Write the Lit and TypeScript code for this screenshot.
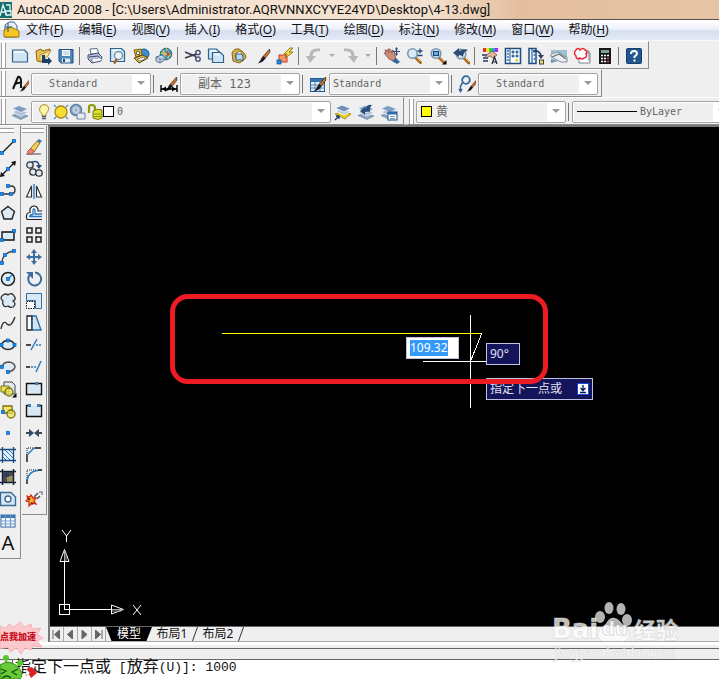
import { LitElement, html, svg, css, nothing } from "lit";
import { customElement, property } from "lit/decorators.js";

const node = (x: number, y: number) => svg`<rect x=${x - 1.5} y=${y - 1.5} width="3" height="3" fill="#1590f0" stroke="#0a5cae" stroke-width=".7"/>`;
const brush = svg`<path d="M16.5 2 L10 9.5 L12 11.5 L17 5Z" fill="#c87632" stroke="#402010" stroke-width=".7"/><path d="M10.5 9 L12.5 11 Q11 15 5 16.5 Q8 13 8.5 11Z" fill="#1c1c24"/>`;
const smallBrush = svg`<g transform="translate(5 4) scale(.78)">${brush}</g>`;
const lens = (x: number, y: number) => svg`<path d=${`M${x + 3} ${y + 4} L${x + 8} ${y + 9}`} stroke="#a8641c" stroke-width="3" stroke-linecap="round"/><path d=${`M${x + 4} ${y + 4} L${x + 8} ${y + 8}`} stroke="#f0b860" stroke-width="1"/><circle cx=${x} cy=${y} r="4.8" fill="#d8ebf6" stroke="#7c98ae" stroke-width="1.6"/>`;
const stack = svg`<path d="M1 12.500 L8 10 L17 13 L10 16.500Z" fill="#8ea7c4" stroke="#60799a" stroke-width=".6"/><path d="M1 9 L8 6.500 L17 9.500 L10 13Z" fill="#a9bfd8" stroke="#f4f8fc" stroke-width=".8"/><path d="M1 5.500 L8 2.500 L17 6 L10 9.500Z" fill="#7f9cbe" stroke="#eef4fa" stroke-width=".8"/>`;
const goldStack = svg`<path d="M1 11 L8 8 L17 11 L11 16Z" fill="#e8cc20" stroke="#8c7408" stroke-width=".7"/><path d="M1 8 L8 6 L17 8.500 L10 12Z" fill="#b4cadf" stroke="#fff" stroke-width=".8"/><path d="M1 5 L8 2 L17 5.500 L10 9Z" fill="#6f91b8" stroke="#fff" stroke-width=".8"/>`;
const page = (x: number, y: number, w: number, h: number) => svg`<path d=${`M${x} ${y} h${w - 3} l3 3 v${h - 3} h${-w}Z`} fill="#cfe5f5" stroke="#2d638e" stroke-width="1.2"/><path d=${`M${x + 2} ${y + 2} h${w - 6}`} stroke="#fff" stroke-width="1.5"/>`;

const icons: Record<string, unknown> = {
  new: svg`${page(1.5, 3, 15, 12)}`,
  open: svg`<path d="M2 4 L7 2 L8 4 L16 2 L14 8 L7 15 L3 14Z" fill="#e9c154" stroke="#8d6713"/><path d="M6 8 L17 3 L14 9 L6 15Z" fill="#f8e29a" stroke="#a87c20" stroke-width=".8"/><path d="M8 8 h3 v4 h3 v-2 l4 4 l-4 4 v-2 h-6Z" fill="#1d3f66"/>`,
  save: svg`<path d="M2 2.500 H16 V16 H4 L2 14Z" fill="#4c86b9" stroke="#1d5083"/><path d="M5 3 h8 v6 h-8Z" fill="#f6f9fc"/><path d="M6 5h6M6 7h6" stroke="#9cb4ca" stroke-width=".8"/><path d="M5 11.500 h8 v4 h-8Z" fill="#e2e8ef"/><path d="M6 12h2v3h-2Z" fill="#1d5083"/>`,
  print: svg`<path d="M5 7 L4 2 L11 1.500 L13 7Z" fill="#fff" stroke="#60708a"/><path d="M2 8 L12 6 L16 10 L15 14 L6 16 L2 12Z" fill="#b9c4dc" stroke="#3e4c6c"/><path d="M3 10 L12 9 L15 12 M5 13 L14 11" stroke="#3e4c6c" fill="none"/><path d="M6 12 L14 11 L16 13 L8 15Z" fill="#f6f8fc"/>`,
  preview: svg`${page(1.5, 1.5, 14, 13)}<circle cx="9.500" cy="8.500" r="4" fill="#e9f4fb" stroke="#6f8da6" stroke-width="1.300"/><path d="M8 12 L5 16.500" stroke="#a8641c" stroke-width="2.500"/>`,
  publish: svg`<circle cx="12" cy="7" r="5" fill="#3a8fd0" stroke="#225c92"/><path d="M2 3 L9 2 L10 8 L4 10Z" fill="#f2c83c" stroke="#77590c"/><circle cx="6" cy="6" r="1.800" fill="#fff" stroke="#222" stroke-width=".8"/><path d="M2 11 L11 8 L16 11 L7 16Z" fill="#ecbe38" stroke="#574414"/><path d="M5 12 L12 10 L13 12 L8 14Z" fill="#fff" stroke="#444" stroke-width=".6"/>`,
  web: svg`<circle cx="11" cy="7" r="5.800" fill="#3d98cc" stroke="#1f6590"/><path d="M7 3 Q12 6 8 11 M11 1.500 Q15 6 13 12 M6 6 L16 8" stroke="#e5c740" fill="none" stroke-width="1.300"/><path d="M12 3 L15 8 L12 9Z" fill="#c4472c"/><path d="M1 10 L7 8 L11 12 L5 16 L1 14Z" fill="#c8d8e8" stroke="#53708e"/><path d="M1 10 L5 12 L11 12 M5 12 V16" stroke="#53708e" fill="none" stroke-width=".8"/>`,
  cut: svg`<path d="M1 5 L12 9.500 M1 11 L12 7" stroke="#343c4c" stroke-width="1.600"/><circle cx="14" cy="5.500" r="2.200" fill="none" stroke="#3c456a" stroke-width="1.300"/><circle cx="14" cy="12" r="2.200" fill="none" stroke="#3c456a" stroke-width="1.300"/><path d="M11 10 L13 11" stroke="#3c456a"/>`,
  copy: svg`${page(1.5, 2, 11, 10)}${page(5.5, 5.5, 11, 10)}`,
  paste: svg`<path d="M2 6 Q4 1 9 2 L13 5 L16 9 Q16 13 9 16 L3 14Z" fill="#d6b450" stroke="#7f651d"/><path d="M5 7 L10 4 L13 8 L12 12 L6 12Z" fill="#fff" stroke="#8b7330"/><path d="M6 7 h5 l2 2 v4 h-7Z" fill="#b9d8ef" stroke="#2d638e"/>`,
  match: svg`${brush}`,
  block: svg`<rect x="3" y="8" width="8" height="7" fill="#f79468" stroke="#c8381c"/><rect x="1" y="13" width="4" height="4" fill="#1590f0" stroke="#0a4c8e" stroke-width=".7"/><path d="M14 1 L8 7 H11 L9 11 L17 5 H13 L17 1Z" fill="#fbe23a" stroke="#7c5a08" stroke-width=".8"/>`,
  undo: svg`<path d="M15 3 Q6 2 6 9" fill="none" stroke="#b5b8bd" stroke-width="3"/><path d="M1 9 H11 L5 16Z" fill="#b5b8bd"/>`,
  redo: svg`<path d="M3 3 Q12 2 12 9" fill="none" stroke="#b5b8bd" stroke-width="3"/><path d="M7 9 H17 L13 16Z" fill="#b5b8bd"/>`,
  pan: svg`<path d="M1 6 L3 6 L2 3 L4 3 L6 6 L5 2 L7 2 L9 6 L9 3 L11 4 L13 12 L10 14 L6 12Z" fill="#c98d7c" stroke="#8a4b40" stroke-width=".8"/><path d="M9 14 L13 11 L17 15 L14 17Z" fill="#3465a0"/><path d="M13.500 1 V8 M10 4.500 H17 M12.500 2.500 l1 -1.500 l1 1.500 M12.500 6.500 l1 1.500 l1 -1.500" stroke="#24487c" fill="none" stroke-width="1.200"/>`,
  zoom: svg`${lens(6.5, 6.5)}<path d="M11.500 4 h5 M14 1.500 v5 M11.500 8.500 h5" stroke="#24487c" stroke-width="1.300"/>`,
  zoomwin: svg`${lens(7, 6.5)}<rect x="4.500" y="4.500" width="5" height="4" fill="#7ab4dc" stroke="#174a80" stroke-width="1.200"/><path d="M17.500 13 v4.500 h-4.500Z" fill="#000"/>`,
  zoomprev: svg`${lens(9, 7)}<path d="M1 6 L7 1 V4 Q13 1 16 3 Q11 5 11 10 Q9 8 7 8 V10Z" fill="#2c4d76"/>`,
  props: svg`<path d="M2 1h3v4h-3Z" fill="#f02828"/><path d="M5 1h3v4h-3Z" fill="#f0e428"/><path d="M8 1h3v4h-3Z" fill="#30d43c"/><path d="M11 1h3v4h-3Z" fill="#28a0e8"/><path d="M14 1h3v4h-3Z" fill="#b028e0"/><path d="M4 9 L11 4 L16 8 L12 11 L9 9 L5 11Z" fill="#eab49c" stroke="#7a4637" stroke-width=".8"/><path d="M1 8h5M2 11h5M2 14h5" stroke="#536880" stroke-width="1.800"/><path d="M11 17 L13.500 10 L16 17 M12 15h4" stroke="#20242c" fill="none" stroke-width="1.200"/>`,
  center: svg`<path d="M1.500 1.500 H16.500 V16.500 H1.500Z" fill="#fff" stroke="#1c4f83" stroke-width="1.600"/><path d="M6 1v16" stroke="#1c4f83"/><path d="M3 4h2M3 7h2M3 10h2M3 13h2" stroke="#2e76b4" stroke-width="1.400"/><path d="M8 4h2v2h-2ZM12 4h2v2h-2ZM8 8h2v2h-2ZM12 8h2v2h-2Z" fill="#5c94c4" stroke="#1c4f83" stroke-width=".7"/><rect x="11.500" y="12" width="2.500" height="2.500" fill="#e6c830"/>`,
  palettes: svg`<path d="M2 1.500 H9 V16.500 H2Z" fill="#e9f3fb" stroke="#1c4f83" stroke-width="1.500"/><path d="M5 1v16" stroke="#1c4f83"/><path d="M6.500 5h1.500M6.500 8h1.500M6.500 12h1.500" stroke="#2e76b4" stroke-width="1.500"/><path d="M6 4 Q13 3 14 9" stroke="#263f60" stroke-width="1.600" fill="none"/><path d="M11 8h6l-3 4Z" fill="#263f60"/><rect x="12.500" y="13" width="4" height="4" fill="#f4de57" stroke="#334455"/>`,
  sheets: svg`<path d="M1 3 H17 V14 L12 10 L6 5 L1 7Z" fill="#9fbfd3"/><path d="M1 7 L8 5 L14 9 L17 10 V15 L11 15 L1 10Z" fill="#e9eef1" stroke="#7f8d96"/><path d="M2 10 L9 7 L16 12" stroke="#65747f" stroke-width="1.300" fill="none"/><path d="M1 12 L8 14 L1 16Z" fill="#6c93b0"/>`,
  markup: svg`<path d="M5 4H16V14M7 6H17V16H6V12" fill="#fff" stroke="#7c838c"/><path d="M3 3 Q5 0 7 3 Q10 0 12 3 Q15 4 13 7 Q15 10 11 11 Q9 13 7 11 Q3 13 3 9 Q0 6 3 3Z" fill="#fff" stroke="#ee2434" stroke-width="1.500"/>`,
  calc: svg`<rect x="3" y="1" width="12" height="16" fill="#171717"/><rect x="5" y="3" width="8" height="3" fill="#7aa58a"/><path d="M5 8.500h2M8 8.500h2M11 8.500h2M5 11.500h2M8 11.500h2M5 14.500h2M8 14.500h2" stroke="#fff" stroke-width="1.500"/><path d="M11 11.500h2M11 14.500h2" stroke="#f03434" stroke-width="1.500"/>`,
  help: svg`<rect x="1.500" y="1.500" width="15" height="15" rx="1" fill="#21578f" stroke="#173e6c"/><path d="M6 7 Q6 4 9 4 Q12 4 12 6.500 Q12 8 9.500 9.500 V11" fill="none" stroke="#fff" stroke-width="2"/><path d="M8.500 12.500h2v2h-2Z" fill="#fff"/>`,
  tstyle: svg`<path d="M2 14 L7 2 Q9 1 10 5 V13 M4 9 Q8 7 11 8" fill="none" stroke="#101010" stroke-width="2"/>${smallBrush}`,
  dstyle: svg`${brush}<path d="M1 10v7M17 10v7M1 14h16" stroke="#000" stroke-width="1.400"/><path d="M2 14l4 -2.500v5ZM16 14l-4 -2.500v5Z" fill="#000"/>`,
  tbstyle: svg`<rect x="1.500" y="3.500" width="14" height="13" fill="#e0edf8" stroke="#245890"/><path d="M1 4h15v3h-15Z" fill="#3974ac"/><path d="M1.500 10h14M1.500 13h14M6 7v9M11 7v9" stroke="#5786b0"/>${brush}`,
  mlstyle: svg`<circle cx="8" cy="5" r="3.800" fill="none" stroke="#35689e" stroke-width="1.800"/><path d="M5 7 L2.500 11 V16 M1 14l1.500 2.500l1.500 -2.500" stroke="#35689e" stroke-width="1.500" fill="none"/>${smallBrush}`,
  layers: stack,
  layercur: svg`${goldStack}<path d="M1 17 L5 13 M2 13h3v3" stroke="#173f70" fill="none" stroke-width="1.300"/>`,
  layerprev: svg`${stack}<path d="M3 8 L8 4 V6 Q10 1 15 2 Q12 5 13 9 Q10 8 8 9 V12Z" fill="#2b4f7c"/>`,
  layerstate: svg`${stack}<rect x="8" y="9" width="9" height="8" fill="#fff" stroke="#1c4f83"/><path d="M8 9h9v2.500h-9Z" fill="#2c6ca8"/><path d="M10 13.500h5M10 15.500h5" stroke="#6b98c0"/>`,
  bulb: svg`<path d="M9 1.500 Q14 2 13.500 6.500 Q13 9 11 10.500 V13 H7 V10.500 Q4.500 9 4.500 6 Q5 2 9 1.500Z" fill="#fff8a8" stroke="#a48e30"/><path d="M7 13.500h4M7 15.500h4" stroke="#555e70" stroke-width="1.500"/>`,
  sun: svg`<circle cx="9" cy="9" r="6" fill="#fbdc35" stroke="#a0891c" stroke-width="1.300"/><path d="M2 2l2 2M16 2l-2 2M2 16l2 -2M16 16l-2 -2" stroke="#4a92d0" stroke-width="1.300"/>`,
  freeze: svg`<circle cx="7" cy="7" r="5.500" fill="#9bb3cd" stroke="#607fa4" stroke-width="1.500"/><circle cx="7" cy="7" r="2.500" fill="none" stroke="#e2ebf4"/><path d="M10 10h6v6h-8v-3" fill="#e7ecf0" stroke="#6d85a0"/>`,
  lock: svg`<path d="M3 10 V4 Q3 2 6 2 Q9 2 9 5 V9" fill="none" stroke="#8e9a10" stroke-width="2.200"/><path d="M7 8 Q12 5 16 7 V15 Q12 18 7 15Z" fill="#e1dc30" stroke="#777c0a"/><path d="M7 11h9M7 13.500h9" stroke="#8e9a10"/>`,
  line: svg`<path d="M3 15 L15 3" stroke="#111" stroke-width="1.300"/>${node(3, 15)}${node(15, 3)}`,
  xline: svg`<path d="M2 16 L16 2" stroke="#111" stroke-width="1.300"/><path d="M1 17l1 -5l4 4ZM17 1l-5 1l4 4Z" fill="#111"/>${node(9, 9)}`,
  pline: svg`<path d="M3 12 H12 Q16 12 16 8 Q16 4 12 4 H9" fill="none" stroke="#333" stroke-width="1.400"/>${node(3, 12)}${node(12, 12)}${node(9, 4)}`,
  polygon: svg`<path d="M9 2.500 L15.500 7.500 L13 15 H5 L2.500 7.500Z" fill="#dcebf5" stroke="#222" stroke-width="1.400"/>`,
  rect: svg`<path d="M3 6h12v8h-12Z" fill="#d9e9f5" stroke="#111" stroke-width="1.400"/>${node(3, 14)}${node(15, 5)}`,
  arc: svg`<path d="M3 15 Q3 5 15 3" fill="none" stroke="#444" stroke-width="1.400"/>${node(3, 15)}${node(6, 7)}${node(15, 3)}`,
  circle: svg`<circle cx="9" cy="9" r="6.500" fill="#e2eef6" stroke="#222" stroke-width="1.500"/><path d="M9 9l4 -4" stroke="#1590f0" stroke-width="1.500"/>${node(9, 9)}`,
  cloud: svg`<path d="M4 9 Q0 6 4 3 Q7 1 9 3 Q13 0 15 4 Q18 7 14 9 Q18 12 14 15 Q11 16 9 14 Q5 16 4 12 Q3 11 4 9Z" fill="#dbeaf4" stroke="#333" stroke-width="1.300"/>`,
  spline: svg`<path d="M2 15 Q4 5 8 10 Q12 14 16 3" fill="none" stroke="#333" stroke-width="1.400"/>`,
  ellipse: svg`<ellipse cx="9" cy="9" rx="6.500" ry="4.500" fill="#dcebf5" stroke="#222" stroke-width="1.400"/>${node(2.5, 9)}${node(9, 4.5)}${node(15.5, 9)}`,
  earc: svg`<path d="M3 8 Q5 4 10 4 Q16 5 16 9 Q15 13 9 14" fill="#dcebf5" stroke="#555" stroke-width="1.500"/>${node(3, 9)}${node(9, 14)}`,
  insert: svg`<path d="M5 2h8l3 3v9h-11Z" fill="#dcebf5" stroke="#444"/><path d="M2 6h8v6h-8Z" fill="#eadf59" stroke="#7c740c"/><circle cx="10" cy="12" r="4" fill="#eadf59" fill-opacity=".7" stroke="#7c740c" stroke-width="1.300"/><path d="M17.500 13v4.500h-4.500Z"/>`,
  makeblock: svg`<path d="M4 4h9v7h-9Z" fill="#f3e86d" stroke="#7c740c" stroke-width="1.300"/><circle cx="12" cy="12" r="4" fill="#eadf59" fill-opacity=".7" stroke="#7c740c" stroke-width="1.300"/>${node(4, 10)}`,
  point: svg`${node(9, 9)}`,
  hatch: svg`<path d="M4 4h10v10h-10Z" fill="#e5f2fb"/><path d="M4 7l7 7M4 11l3 3M6 4l8 8M10 4l4 4" stroke="#2a7cc0"/><path d="M1 3.500h16M1 14.500h16M3.500 1v16M14.500 1v16" stroke="#174a80" stroke-width="1.300"/>`,
  gradient: svg`<path d="M3 3h12v12h-12Z" fill="#4c5052"/><path d="M8 8h6v6h-6Z" fill="#9a905a"/><path d="M5 5h5v4h-5Z" fill="#2c3c5c"/><path d="M1 3.500h16M1 14.500h16M3.500 1v16M14.500 1v16" stroke="#172438" stroke-width="1.500"/>`,
  region: svg`<path d="M1.500 2.500 H12 L16.500 7 V15.500 H1.500Z" fill="#d6e7f3" stroke="#3a6a94" stroke-width="1.400"/><circle cx="9" cy="9" r="3" fill="#fff" stroke="#3a6a94" stroke-width="1.400"/>`,
  table: svg`<rect x="2" y="3" width="14" height="12" fill="#fff" stroke="#2f69a4"/><path d="M2 3h14v3h-14Z" fill="#3977b5"/><path d="M2 9h14M2 12h14M6.500 3v12M11.500 3v12" stroke="#6f9bc8" stroke-width="1.200"/>`,
  erase: svg`<path d="M1 16h15" stroke="#444"/><path d="M5 11 L12 3 L15 5 L9 14Z" fill="#f2cf54" stroke="#6d5318" stroke-width=".8"/><path d="M12 3l2 -2l3 2l-2 2Z" fill="#3a76b8"/><path d="M2.500 13.500l3 -3l4 3l-3 2.500h-3Z" fill="#ee8474" stroke="#993333" stroke-width=".7"/>`,
  copyobj: svg`<circle cx="5" cy="5" r="3.200" fill="#dcebf5" stroke="#333" stroke-width="1.300"/><circle cx="8" cy="12" r="3.200" fill="#dcebf5" stroke="#333" stroke-width="1.300"/><circle cx="14" cy="13" r="3.200" fill="#dcebf5" stroke="#333" stroke-width="1.300"/><path d="M7 2Q13 0 14 5" stroke="#234d80" stroke-width="1.500" fill="none"/><path d="M11 5h6l-3 4Z" fill="#234d80"/>`,
  mirror: svg`<path d="M1.500 15 L6.500 4 V15Z M16.500 15 L11.500 4 V15Z" fill="#fff" stroke="#333" stroke-width="1.200"/><path d="M9 2v15" stroke="#1873c8" stroke-width="1.300"/>`,
  offset: svg`<path d="M2 15.500h15M2 15.500 Q0 9 5 8.500 V5 Q6 2 9 2 Q12 2 13 5 V7 H17" fill="#fff" stroke="#222" stroke-width="1.200"/><path d="M17 12.500H4.500Q5 10.500 8 10.500 V6 Q9 4 10 6 V10H17" fill="none" stroke="#2878c4" stroke-width="1.300"/>`,
  array: svg`<path d="M2 2h5v5h-5ZM11 2h5v5h-5ZM2 11h5v5h-5ZM11 11h5v5h-5Z" fill="#e9f1f7" stroke="#222" stroke-width="1.500"/>`,
  move: svg`<path d="M9 3v12M3 9h12" stroke="#3e6c9c" stroke-width="2"/><path d="M9 1l3 4h-6ZM9 17l3 -4h-6ZM1 9l4 -3v6ZM17 9l-4 -3v6Z" fill="#3e6c9c"/>`,
  rotate: svg`<path d="M5 4.500 A6.500 6.500 0 1 0 10 2.500" fill="none" stroke="#3e6c9c" stroke-width="2"/><path d="M1 2h7v7Z" fill="#3e6c9c"/>`,
  scale: svg`<path d="M1.500 1.500h15v15h-6v-8h-9Z" fill="#d9e8f3" stroke="#2b70ac"/><path d="M1.500 9.500h8v7h-8Z" fill="#fff" stroke="#111" stroke-dasharray="1.500 1"/>`,
  stretch: svg`<path d="M2 2h5v14h-5Z" fill="#fff" stroke="#222" stroke-width="1.300"/><path d="M7 2v14h9l-5 -14Z" fill="#d4e5f2" stroke="#2b70ac" stroke-width="1.400"/><path d="M7 2v14" stroke="#111" stroke-dasharray="1.500 1"/>`,
  trim: svg`<path d="M1 9h5" stroke="#111" stroke-width="1.500"/><path d="M6 14l6 -11" stroke="#2b78c4" stroke-width="1.500"/><path d="M11 9h6" stroke="#2b78c4" stroke-width="1.300" stroke-dasharray="2 1"/>`,
  extend: svg`<path d="M1 9h4" stroke="#111" stroke-width="1.500"/><path d="M6 9h5" stroke="#2b78c4" stroke-width="1.300" stroke-dasharray="2 1"/><path d="M11 14l5 -11" stroke="#2b78c4" stroke-width="1.500"/>`,
  breakpt: svg`<path d="M1.500 3.500h15v11h-15Z" fill="#d8e8f3" stroke="#111" stroke-width="1.400"/><rect x="10" y="2" width="3" height="3" fill="#3e7fb8"/>`,
  breakobj: svg`<path d="M4 3.500h-2.500v11h15v-11h-2.500" fill="#d8e8f3" stroke="#111" stroke-width="1.400"/><path d="M3 2h3v3h-3ZM12 2h3v3h-3Z" fill="#3e7fb8"/>`,
  join: svg`<path d="M1 9h5M12 9h5" stroke="#111" stroke-width="1.500"/><path d="M4 5l5 4l-5 4ZM14 5l-5 4l5 4Z" fill="#2c4a66"/>`,
  chamfer: svg`<path d="M2 16v-8M10 2h6" stroke="#111" stroke-width="1.400"/><path d="M2 9v-7h8" stroke="#111" stroke-dasharray="1 1" fill="none"/><path d="M2 9l7 -7" stroke="#2b78c4" stroke-width="1.400"/>`,
  fillet: svg`<path d="M2 16v-4M13 2h4" stroke="#111" stroke-width="1.400"/><path d="M2 12v-10h10" stroke="#111" stroke-dasharray="1 1" fill="none"/><path d="M2 12Q4 3 13 2.500" stroke="#2b78c4" stroke-width="1.500" fill="none"/>`,
  explode: svg`<path d="M2 6l3 1l1 -2l2 3l3 0l-2 3l2 3l-4 -1l-3 3l0 -4l-3 -1l2 -2Z" fill="#f5b92c" stroke="#d32a18" stroke-width="1.300"/><path d="M9 7l4 -4M12 9l3 -3" stroke="#555" stroke-width="1.500"/><path d="M14 2h3v3" stroke="#7b8fa6" stroke-width="1.500" fill="none"/><path d="M3 8l2 2M6 13l2 1" stroke="#8a1c12" stroke-width="2"/>`,
};

const icon = (name: string) => html`<svg class="icon" viewBox="0 0 18 18" aria-hidden="true">${icons[name]}</svg>`;

@customElement("tool-strip")
export class ToolStrip extends LitElement {
  @property({ type: Boolean, reflect: true }) vertical = false;
  @property({ type: Boolean, reflect: true }) docked = false;
  @property({ type: Boolean, reflect: true }) fill = false;

  static styles = css`
    :host { display: flex; align-items: center; box-sizing: border-box; height: 28px; padding: 1px 3px 0 0; border-top: 1px solid #fff; border-right: 1px solid #8c8c8c; border-bottom: 1px solid #8c8c8c; flex: none; }
    :host([fill]) { flex: 1; min-width: 0; overflow: hidden; border-right: 0; padding-right: 0; }
    :host([vertical]) { flex-direction: column; height: auto; width: 25px; padding: 0 0 4px; }
    :host([vertical][docked]) { width: 21px; padding-right: 4px; }
    .grip { flex: none; align-self: stretch; box-sizing: border-box; width: 5px; margin: 0 2px 0 1px; border-left: 1px solid #a0a0a0; border-right: 1px solid #a0a0a0; background: #fff; }
    :host([vertical]) .grip { box-sizing: content-box; width: auto; height: 3px; margin: 2px 2px 3px 0; border: 0; border-top: 1px solid #a0a0a0; border-bottom: 1px solid #a0a0a0; }
  `;

  render() {
    return html`<span class="grip"></span><slot></slot>`;
  }
}

@customElement("app-root")
export class AppRoot extends LitElement {
  static styles = css`
    :host { display: flex; flex-direction: column; height: 100vh; overflow: hidden; position: relative; background: #efefef; color: #111; font: 12px/16px "Noto Sans", "Noto Sans CJK SC", sans-serif; }
    * { box-sizing: border-box; }
    button { display: flex; align-items: center; justify-content: center; flex: none; padding: 0; border: 0; background: none; color: inherit; font: inherit; }
    .icon { width: 18px; height: 18px; flex: none; display: block; }
    .title { display: flex; align-items: center; flex: none; height: 20px; gap: 5px; white-space: nowrap; overflow: hidden; background: linear-gradient(90deg, #f7e6d6, #f3dfcd 60%, #e4bf9f 72%, #e6c4a6); border-bottom: 1px solid #5a5048; }
    .title h1 { margin: 0; font: 13px/18px Roboto, "Noto Sans", sans-serif; color: #111; }
    .logo { width: 12px; height: 16px; flex: none; }
    .menu { display: flex; align-items: center; flex: none; height: 21px; padding-left: 3px; gap: 15px; white-space: nowrap; background: linear-gradient(#fff, #edf1f9 45%, #d6def0 55%, #e4eaf6); border-bottom: 1px solid #f8f8f8; }
    .menu .icon { margin-right: -10px; }
    .menu u { text-underline-offset: 2px; }
    .row { display: flex; flex: none; height: 28px; gap: 4px; }
    .row.ruled { box-shadow: inset 0 -1px #b4b4b4; }
    .tool { width: 23px; height: 24px; }
    .more { width: 13px; height: 24px; }
    .sep { flex: none; width: 2px; height: 18px; margin: 0 2px; border-left: 1px solid #777; }
    .combo { position: relative; display: flex; align-items: center; flex: none; width: 120px; height: 22px; border: 1px solid #a3a3a3; border-radius: 2px; background: #efefef; box-shadow: inset 0 0 0 1px #fff; overflow: hidden; }
    .combo.wide { width: 300px; padding-left: 3px; }
    .combo.mid { width: 150px; padding-left: 4px; }
    .combo.open { width: 160px; }
    .combo .icon { margin-right: -1px; }
    select { appearance: none; flex: 1; min-width: 0; height: 20px; border: 0; padding: 0 20px 0 17px; background: none; color: #666; font: 10px/18px "DejaVu Sans Mono", "Noto Sans CJK SC", monospace; }
    .cjk select { font-size: 12px; }
    .near select { padding-left: 3px; }
    .combo.mid select { padding-left: 4px; }
    .drop { position: absolute; right: 1px; top: 1px; bottom: 1px; width: 17px; display: flex; align-items: center; justify-content: center; background: #fff; pointer-events: none; }
    .swatch { flex: none; width: 11px; height: 11px; border: 1px solid #000; background: #fff; }
    .swatch.yellow { background: #ff0; }
    .stroke { flex: none; width: 60px; margin-left: 4px; border-top: 1px solid #000; }
    .work { display: flex; flex: 1; min-height: 0; }
    .bars { display: flex; align-items: flex-start; gap: 1px; flex: none; width: 48px; }
    .bars .tool { width: 24px; height: 22px; }
    .bars .edge { width: 16px; }
    .letter { font: 20px/22px "Noto Sans", sans-serif; }
    .view { display: flex; flex-direction: column; flex: 1; min-width: 0; border-left: 2px solid #777; }
    .canvas { position: relative; flex: 1; min-height: 0; background: #000; border-top: 2px solid #777; overflow: hidden; }
    .drawing { position: absolute; inset: 0; width: 100%; height: 100%; }
    .ucs { position: absolute; left: 6px; bottom: 2px; width: 90px; height: 96px; }
    .mark { position: absolute; left: 120px; top: 167px; width: 378px; height: 90px; border: 5px solid #ed1c24; border-radius: 18px; }
    .entry { position: absolute; left: 356px; top: 210px; width: 53px; height: 22px; padding: 2px 3px; background: #fff; border: 1px solid #c0c0e0; }
    .entry input { display: block; width: 38px; height: 16px; padding: 0; border: 0; background: #3399ff; color: #fff; font: inherit; }
    .tip { position: absolute; display: flex; align-items: center; justify-content: space-between; height: 22px; padding: 0 3px; background: #14145a; border: 1px solid #c0c0e0; color: #e0e0f0; }
    .angle { left: 436px; top: 216px; width: 34px; }
    .prompt { left: 436px; top: 251px; width: 107px; }
    .down { width: 12px; height: 12px; }
    .tabs { display: flex; flex: none; height: 16px; border-top: 1px solid #666; border-bottom: 1px solid #aaa; white-space: nowrap; }
    .nav { width: 14px; border-right: 1px solid #aaa; }
    .nav svg { width: 9px; height: 9px; }
    .tab { position: relative; width: 46px; padding-right: 6px; font-size: 12px; line-height: 14px; }
    .tab.active { padding-right: 0; background: #000; color: #fff; clip-path: polygon(0 0, 100% 0, 88% 100%, 12% 100%); }
    .tab .slant { position: absolute; right: 0; top: 0; width: 6px; height: 14px; }
    .split { flex: none; height: 18px; border-top: 3px solid #fff; border-bottom: 1px solid #666; display: flex; align-items: center; }
    .split::before { content: ""; flex: 1; align-self: flex-start; margin-top: 3px; border-top: 1px solid #666; }
    .command { display: flex; align-items: flex-start; flex: none; height: 19px; margin-left: 12px; padding-left: 2px; border-left: 1px solid #666; background: #fff; font: 13px/16px "Liberation Mono", "Noto Sans CJK SC", monospace; white-space: pre; color: #111; }
    .command .han { font-size: 16px; }
    .command input { flex: 1; min-width: 0; height: 16px; padding: 0; border: 0; background: none; color: inherit; font: inherit; }
    .sticker { position: absolute; left: 0; bottom: 0; width: 44px; height: 60px; pointer-events: none; }
    .sticker svg { position: absolute; inset: 0; width: 44px; height: 60px; }
    .sticker span { position: absolute; left: 0; top: 10px; font: 900 9px/16px "Noto Sans CJK SC", sans-serif; color: #c81020; white-space: nowrap; }
    .wm { position: absolute; right: 40px; bottom: 16px; width: 127px; height: 62px; color: rgba(255, 255, 255, 0.75); -webkit-text-stroke: 1px rgba(190, 190, 190, 0.5); paint-order: stroke fill; pointer-events: none; white-space: nowrap; }
    .wm .paw { position: absolute; inset: 0; width: 127px; height: 62px; }
    .wm span { position: absolute; }
    .bai { left: 0; top: 13px; font: 700 26px/30px "DejaVu Sans", sans-serif; }
    .du { left: 50px; top: 16px; font: 700 18px/24px "DejaVu Sans", sans-serif; -webkit-text-stroke: 1px rgba(160, 160, 160, 0.6); }
    .jy { left: 82px; top: 14px; font: 700 22px/26px "Noto Sans CJK SC", sans-serif; }
    .url { left: 2px; top: 43px; font: 14px/18px "Noto Sans", sans-serif; }
  `;

  private tool(name: string, label: string) {
    return html`<button class="tool" aria-label=${label}>${icon(name)}</button>`;
  }

  private tools(list: string[][]) {
    return list.map(([name, label]) =>
      name === "|" ? html`<span class="sep"></span>`
      : name === "v" ? html`<button class="more" aria-label=${label}><svg width="6" height="4" aria-hidden="true"><path d="M0 0h6l-3 3Z" fill="#a8aab4"/></svg></button>`
      : this.tool(name, label));
  }

  private combo(label: string, value: string, cls = "", lead: unknown = nothing) {
    return html`<div class="combo ${cls}">${lead}<select aria-label=${label}><option>${value}</option></select>
      <span class="drop"><svg width="8" height="5" aria-hidden="true"><path d="M0 0h8l-4 4Z" fill="#999"/></svg></span></div>`;
  }

  private bar(list: string[][], edge: boolean) {
    return list.map(([name, label]) => html`<button class="tool ${edge ? "edge" : ""}" aria-label=${label}>${name === "A" ? html`<span class="letter">A</span>` : icon(name)}</button>`);
  }

  render() {
    const menus = [["文件", "F"], ["编辑", "E"], ["视图", "V"], ["插入", "I"], ["格式", "O"], ["工具", "T"], ["绘图", "D"], ["标注", "N"], ["修改", "M"], ["窗口", "W"], ["帮助", "H"]];
    const standard = [["new", "新建"], ["open", "打开"], ["save", "保存"], ["|"], ["print", "打印"], ["preview", "打印预览"], ["publish", "发布"], ["web", "三维 DWF"], ["|"], ["cut", "剪切"], ["copy", "复制"], ["paste", "粘贴"], ["match", "特性匹配"], ["block", "块编辑器"], ["|"], ["undo", "放弃"], ["v", "放弃列表"], ["redo", "重做"], ["v", "重做列表"], ["|"], ["pan", "实时平移"], ["zoom", "实时缩放"], ["zoomwin", "窗口缩放"], ["zoomprev", "缩放上一个"], ["|"], ["props", "特性"], ["center", "设计中心"], ["palettes", "工具选项板"], ["sheets", "图纸集"], ["markup", "标记集"], ["calc", "快速计算器"], ["|"], ["help", "帮助"]];
    const draw = [["line", "直线"], ["xline", "构造线"], ["pline", "多段线"], ["polygon", "正多边形"], ["rect", "矩形"], ["arc", "圆弧"], ["circle", "圆"], ["cloud", "修订云线"], ["spline", "样条曲线"], ["ellipse", "椭圆"], ["earc", "椭圆弧"], ["insert", "插入块"], ["makeblock", "创建块"], ["point", "点"], ["hatch", "图案填充"], ["gradient", "渐变色"], ["region", "面域"], ["table", "表格"], ["A", "多行文字"]];
    const modify = [["erase", "删除"], ["copyobj", "复制对象"], ["mirror", "镜像"], ["offset", "偏移"], ["array", "阵列"], ["move", "移动"], ["rotate", "旋转"], ["scale", "缩放"], ["stretch", "拉伸"], ["trim", "修剪"], ["extend", "延伸"], ["breakpt", "打断于点"], ["breakobj", "打断"], ["join", "合并"], ["chamfer", "倒角"], ["fillet", "圆角"], ["explode", "分解"]];
    const navs = [["第一个", "M1 0v9M7.500 0v9l-5 -4.500Z"], ["上一个", "M6.500 0v9l-5 -4.500Z"], ["下一个", "M2 0v9l5 -4.500Z"], ["最后一个", "M1.500 0v9l5 -4.500ZM8 0v9"]];

    return html`
      <header class="title">
        <svg class="logo" viewBox="0 0 12 16" aria-hidden="true"><path d="M0 0h12v16H0Z" fill="#166f6c"/><path d="M0 14L3 3l4 11M1 10h5M6 3h4v7M5 9h6v4h-5Z" fill="none" stroke="#dff6f2" stroke-width="1.300"/></svg>
        <h1>AutoCAD 2008 - [C:\\Users\\Administrator.AQRVNNXCYYE24YD\\Desktop\\4-13.dwg]</h1>
      </header>
      <nav class="menu">
        <svg class="icon" viewBox="0 0 18 18" aria-hidden="true"><path d="M2 4L6 1h5l3 4v11H2Z" fill="#e7eef8" stroke="#496894"/><path d="M1 9l7 -3l8 4v6H1Z" fill="#f3c623" stroke="#9d7708"/><path d="M5 2v9M2 6h7" stroke="#2a507f"/></svg>
        ${menus.map(([t, k]) => html`<button>${t}(<u>${k}</u>)</button>`)}
      </nav>
      <div class="row"><tool-strip>${this.tools(standard)}</tool-strip></div>
      <div class="row"><tool-strip>
        ${this.tool("tstyle", "文字样式管理器")}${this.combo("文字样式", "Standard")}<span class="sep"></span>
        ${this.tool("dstyle", "标注样式管理器")}${this.combo("标注样式", "副本 123", "cjk")}<span class="sep"></span>
        ${this.tool("tbstyle", "表格样式管理器")}${this.combo("表格样式", "Standard", "near")}<span class="sep"></span>
        ${this.tool("mlstyle", "多重引线样式管理器")}${this.combo("多重引线样式", "Standard")}
      </tool-strip></div>
      <div class="row ruled">
        <tool-strip>
          ${this.tool("layers", "图层特性管理器")}
          ${this.combo("图层", "0", "wide near", html`${["bulb", "sun", "freeze", "lock"].map(icon)}<span class="swatch"></span>`)}
          ${this.tools([["layercur", "置为当前"], ["layerprev", "上一个图层"], ["layerstate", "图层状态"]])}
        </tool-strip>
        <tool-strip fill>
          ${this.combo("颜色", "黄", "mid cjk", html`<span class="swatch yellow"></span>`)}<span class="sep"></span>
          ${this.combo("线型", "ByLayer", "open near", html`<span class="stroke"></span>`)}
        </tool-strip>
      </div>
      <main class="work">
        <div class="bars">
          <tool-strip vertical docked>${this.bar(draw, true)}</tool-strip>
          <tool-strip vertical>${this.bar(modify, false)}</tool-strip>
        </div>
        <div class="view">
          <div class="canvas">
            <svg class="drawing" aria-hidden="true" shape-rendering="crispEdges">
              <path d="M172 206.500H432" stroke="#ffff00"/>
              <path d="M420.500 188V281M373 234.500H436" stroke="#fff"/>
              <path d="M432 206L421 233" stroke="#fff"/>
            </svg>
            <svg class="ucs" viewBox="0 0 90 96" aria-hidden="true" fill="none" stroke="#fff">
              <path d="M3.500 76.500h10v10h-10ZM8.500 81.500V33M8.500 81.500H56" shape-rendering="crispEdges"/>
              <path d="M8.500 21.500L4 33.500h9ZM67.500 81.500L55.500 77v9Z"/><path d="M8.500 23v10M10 26v7M67 81.500H56M65 83H56" stroke="#aaa"/>
              <path d="M6 2l4.500 6l4.500 -6M10.500 8v6M77 77l8 10M85 77l-8 10"/>
            </svg>
            <label class="entry"><input aria-label="距离" value="109.32"></label>
            <div class="tip angle">90°</div>
            <div class="tip prompt">指定下一点或
              <svg class="down" viewBox="0 0 12 12" aria-hidden="true"><path d="M.500 .500h11v11H.500Z" fill="#fff" stroke="#1848e0"/><path d="M6 2v5M3.500 5L6 7.500L8.500 5M3 9.500h6" fill="none" stroke="#001050" stroke-width="1.300"/></svg>
            </div>
            <div class="mark"></div>
          </div>
          <div class="tabs">
            ${navs.map(([l, d]) => html`<button class="nav" aria-label=${l}><svg viewBox="0 0 9 9" aria-hidden="true"><path d=${d} fill="#666" stroke="#666"/></svg></button>`)}
            <button class="tab active">模型</button>
            ${["布局1", "布局2"].map((t) => html`<button class="tab">${t}<svg class="slant" viewBox="0 0 6 14" aria-hidden="true"><path d="M5.500 0L.500 14" stroke="#333"/></svg></button>`)}
          </div>
        </div>
      </main>
      <div class="split"></div>
      <label class="command"><span class="han">指定下一点或</span><span> [</span><span class="han">放弃</span><span>(U)]: </span><input aria-label="命令" value="1000"></label>
      <div class="sticker">
        <svg viewBox="0 0 44 60" aria-hidden="true">
          <path d="M0 7L6 9L9 5L14 8L20 3L24 8L31 5L32 10L41 9L37 15L43 19L37 22L42 28L33 27L31 31L25 29L21 35L17 29L10 33L8 28L0 30Z" fill="#fbc9cc" stroke="#f3a4ac" stroke-width=".7"/>
          <path d="M6 42L8 50" stroke="#3a9a1e" stroke-width="1.500"/><circle cx="6" cy="39" r="3" fill="#58c828"/><circle cx="20" cy="44" r="3" fill="#58c828"/>
          <path d="M0 46Q9 40 17 47Q25 54 20 60H0Z" fill="#6acb38" stroke="#2f8c14"/>
          <path d="M1 50l5 2l-5 3M18 50l-6 3l5 3M2 59q5 -4 9 0" fill="none" stroke="#14500a" stroke-width="1.300"/>
          <path d="M26 50L32 48L37 54L31 59Z" fill="#e02020"/><path d="M26 50l4 4l-4 3Z" fill="#fff" stroke="#888" stroke-width=".5"/>
        </svg>
        <span>点我加速</span>
      </div>
      <div class="wm">
        <svg class="paw" viewBox="0 0 127 62" aria-hidden="true" fill="#fff" fill-opacity=".7"><ellipse cx="48" cy="16" rx="5" ry="6"/><ellipse cx="57" cy="7" rx="4.500" ry="6"/><ellipse cx="69" cy="8" rx="4.500" ry="6"/><ellipse cx="75" cy="19" rx="5" ry="6"/><path d="M61 17Q66 17 70 23Q78 29 77 34Q76 41 68 40H54Q46 41 46 33Q47 28 54 23Q57 17 61 17Z" stroke="#c8c8c8" stroke-opacity=".6"/></svg>
        <span class="bai">Bai</span><span class="du">du</span><span class="jy">经验</span><span class="url">jingyan.baidu.com</span>
      </div>
    `;
  }
}
